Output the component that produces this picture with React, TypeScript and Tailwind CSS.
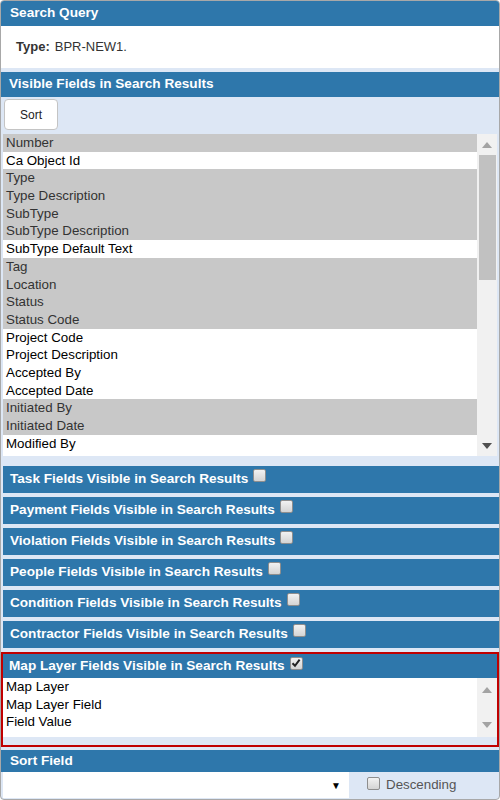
import type { ReactNode } from "react";

const fields: Array<[string, boolean]> = [
  ["Number", true],
  ["Ca Object Id", false],
  ["Type", true],
  ["Type Description", true],
  ["SubType", true],
  ["SubType Description", true],
  ["SubType Default Text", false],
  ["Tag", true],
  ["Location", true],
  ["Status", true],
  ["Status Code", true],
  ["Project Code", false],
  ["Project Description", false],
  ["Accepted By", false],
  ["Accepted Date", false],
  ["Initiated By", true],
  ["Initiated Date", true],
  ["Modified By", false],
  ["Date Modified", false],
];

const collapsed = [
  "Task Fields Visible in Search Results",
  "Payment Fields Visible in Search Results",
  "Violation Fields Visible in Search Results",
  "People Fields Visible in Search Results",
  "Condition Fields Visible in Search Results",
  "Contractor Fields Visible in Search Results",
];

function Check({ checked = false }: { checked?: boolean }) {
  return (
    <span className="inline-flex h-[13px] w-[13px] shrink-0 items-center justify-center rounded-[2px] border border-[#8e8e8e] bg-gradient-to-b from-[#f2f2f2] to-[#d4d4d4]">
      {checked ? (
        <svg width="10" height="10" viewBox="0 0 10 10">
          <path d="M1.5 5.2 L4 7.8 L8.6 1.6" fill="none" stroke="#222" strokeWidth="2" />
        </svg>
      ) : null}
    </span>
  );
}

function Arrow({ up, color }: { up: boolean; color: string }) {
  return (
    <svg width="10" height="6" viewBox="0 0 10 6">
      <path d={up ? "M0 6 L5 0 L10 6 Z" : "M0 0 L10 0 L5 6 Z"} fill={color} />
    </svg>
  );
}

function Bar({ children }: { children: ReactNode }) {
  return (
    <div className="flex h-[27px] items-center gap-[5px] bg-[#2e77ab] pl-[7px] text-[13.6px] font-bold text-white">
      {children}
    </div>
  );
}

export default function App() {
  return (
    <div className="h-[800px] w-[500px] overflow-hidden rounded-[4px] border border-[#a8a8a8] bg-[#dde7f5] font-['Liberation_Sans',Arial,sans-serif]">
      <div className="flex h-[25px] items-center bg-[#2e77ab] pl-[9px] text-[13.6px] font-bold text-white">
        Search Query
      </div>
      <div className="flex h-[42px] items-center bg-white pl-[15px] text-[13px] text-[#333]">
        <span className="font-bold">Type:</span>
        <span className="ml-[5px]">BPR-NEW1.</span>
      </div>
      <div className="mt-[4px] flex h-[25px] items-center bg-[#2e77ab] pl-[8px] text-[13.6px] font-bold text-white">
        Visible Fields in Search Results
      </div>
      <div className="h-[37px] pl-[3px] pt-[2px]">
        <button
          type="button"
          className="h-[31px] w-[54px] rounded-[4px] border border-[#c4c4c4] bg-white text-[12px] text-[#222]"
        >
          Sort
        </button>
      </div>
      <div className="mx-[2px] flex h-[322px] overflow-hidden bg-white">
        <div className="flex-1 overflow-hidden">
          {fields.map(([label, selected]) => (
            <div
              key={label}
              className={`h-[17.7px] pl-[3px] text-[13.33px] leading-[17.7px] ${
                selected ? "bg-[#c8c8c8] text-[#333]" : "bg-white text-black"
              }`}
            >
              {label}
            </div>
          ))}
        </div>
        <div className="flex w-[20px] flex-col items-center bg-[#f1f1f1]">
          <div className="flex h-[21px] items-center">
            <Arrow up color="#a3a3a3" />
          </div>
          <div className="h-[125px] w-[17px] bg-[#c1c1c1]" />
          <div className="flex-1" />
          <div className="flex h-[20px] items-center">
            <Arrow up={false} color="#505050" />
          </div>
        </div>
      </div>
      <div className="ml-[2px] mt-[10px] flex flex-col gap-[4px]">
        {collapsed.map((title) => (
          <Bar key={title}>
            <span>{title}</span>
            <span className="-mt-[3px]">
              <Check />
            </span>
          </Bar>
        ))}
      </div>
      <div className="mt-[4px] border-2 border-[#c00000]">
        <div className="flex h-[24px] items-center gap-[5px] bg-[#2e77ab] pl-[6px] text-[13.6px] font-bold text-white">
          <span>Map Layer Fields Visible in Search Results</span>
          <span className="-mt-[3px]">
            <Check checked />
          </span>
        </div>
        <div className="flex h-[59px] bg-white">
          <div className="flex-1 pt-[0px] text-[13.33px] text-black">
            {["Map Layer", "Map Layer Field", "Field Value"].map((label) => (
              <div key={label} className="h-[17.7px] pl-[3px] leading-[17.7px]">
                {label}
              </div>
            ))}
          </div>
          <div className="flex w-[20px] flex-col items-center justify-between bg-[#f1f1f1] py-[9px]">
            <Arrow up color="#a3a3a3" />
            <Arrow up={false} color="#a3a3a3" />
          </div>
        </div>
        <div className="h-[8px]" />
      </div>
      <div className="mt-[3px] flex h-[22px] items-center bg-[#2e77ab] pl-[9px] text-[13.6px] font-bold text-white">
        Sort Field
      </div>
      <div className="flex h-[26px]">
        <div className="ml-[2px] flex w-[346px] items-center justify-end bg-white pr-[8px] text-[10px] text-black">
          ▼
        </div>
        <div className="ml-[18px] mt-[1px]">
          <Check />
        </div>
        <span className="ml-[6px] mt-[4px] text-[13.33px] leading-[17px] text-[#555]">Descending</span>
      </div>
    </div>
  );
}
